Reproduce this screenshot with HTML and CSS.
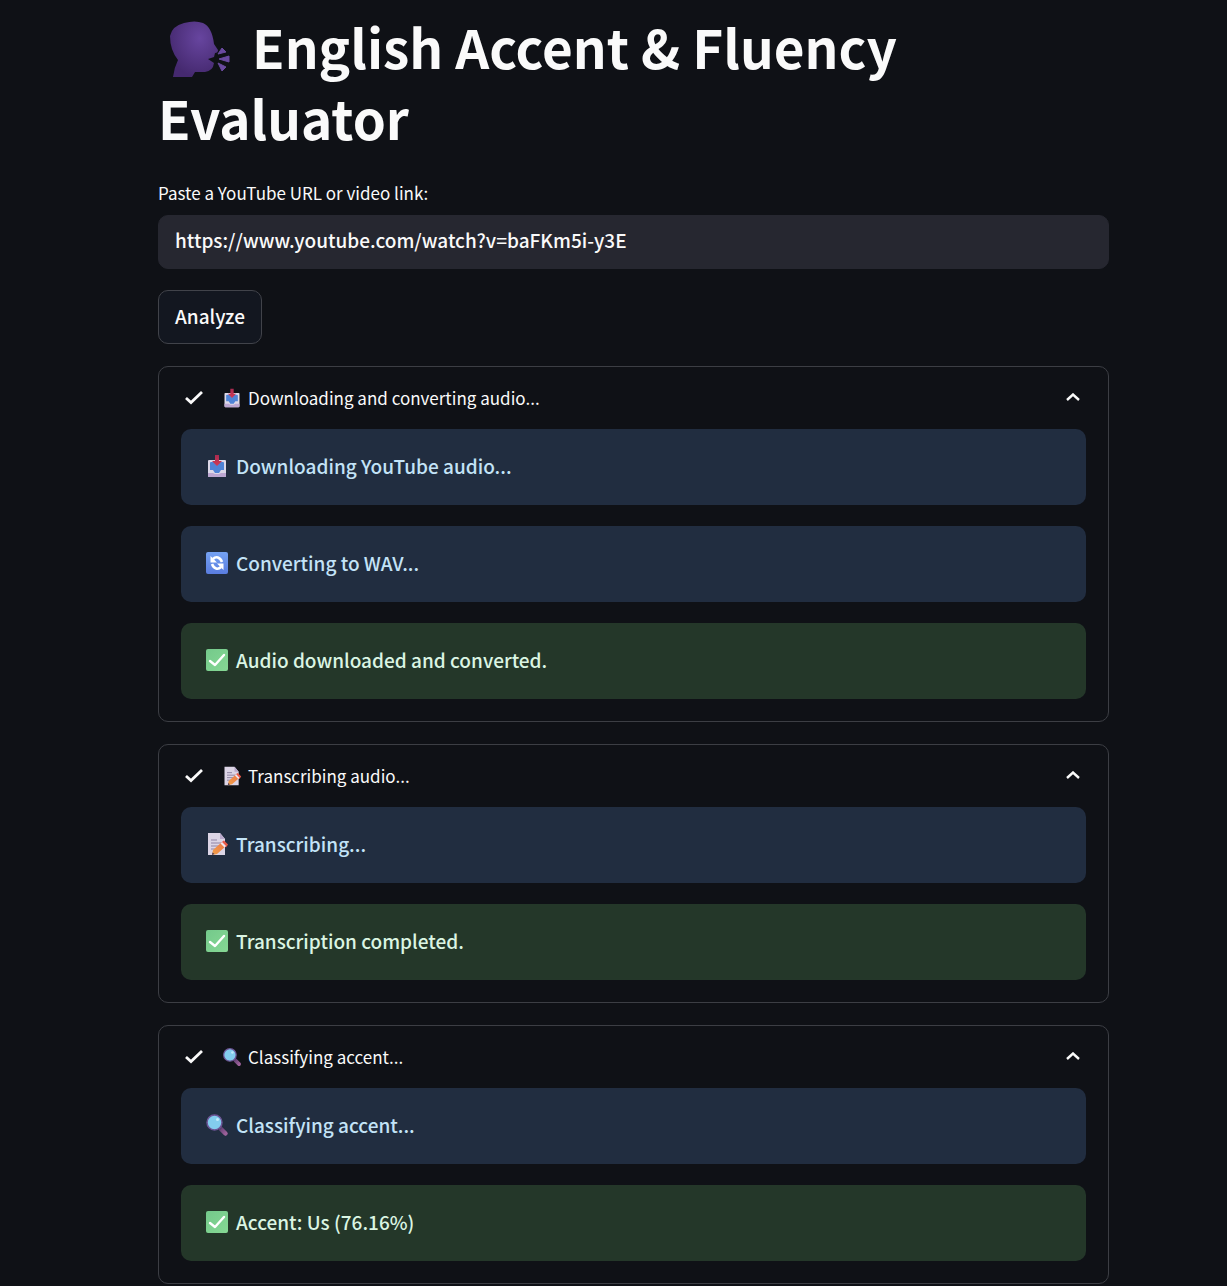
FILE: index.html
```html
<!DOCTYPE html>
<html lang="en">
<head>
<meta charset="utf-8">
<meta name="viewport" content="width=device-width, initial-scale=1">
<title>English Accent &amp; Fluency Evaluator</title>
<link rel="stylesheet" href="styles.css">
</head>
<body>
<svg class="sprite" aria-hidden="true">
  <defs>
    <radialGradient id="headFill" cx=".62" cy=".3" r=".7">
      <stop offset="0" stop-color="#67459f"/>
      <stop offset="1" stop-color="#45296f"/>
    </radialGradient>
    <linearGradient id="blueFill" x1="0" y1="0" x2="0" y2="1">
      <stop offset="0" stop-color="#75a2f2"/>
      <stop offset="1" stop-color="#5a7de0"/>
    </linearGradient>
    <linearGradient id="greenFill" x1="0" y1="0" x2="1" y2="1">
      <stop offset="0" stop-color="#74c98b"/>
      <stop offset="1" stop-color="#86d894"/>
    </linearGradient>
    <linearGradient id="arrowFill" x1="0" y1="0" x2="0" y2="1">
      <stop offset="0" stop-color="#a92a50"/>
      <stop offset="1" stop-color="#d33a55"/>
    </linearGradient>
    <linearGradient id="handleFill" x1="0" y1="0" x2="1" y2="1">
      <stop offset="0" stop-color="#6b4479"/>
      <stop offset="1" stop-color="#9b6099"/>
    </linearGradient>
    <linearGradient id="pencilFill" x1="0" y1="1" x2="1" y2="0">
      <stop offset="0" stop-color="#f2a24a"/>
      <stop offset="1" stop-color="#ec7446"/>
    </linearGradient>
  </defs>
  <symbol id="inbox" viewBox="0 0 24 24">
    <path d="M4 6h16q1 0 1 1v15q0 1-1 1H4q-1 0-1-1V7q0-1 1-1z" fill="#dcd8e8"/>
    <path d="M6 8h12q1 0 1 1v7h-3l-2 3h-4l-2-3H5V9q0-1 1-1z" fill="#4f83d6"/>
    <path d="M3 19h5l2 1h4l2-1h5v3q0 1-1 1H4q-1 0-1-1z" fill="#bda7d2"/>
    <path d="M10 1h4v6h3l-5 5-5-5h3z" fill="url(#arrowFill)"/>
  </symbol>
  <symbol id="refresh" viewBox="0 0 24 24">
    <rect x="1" y="1" width="22" height="22" rx="2" fill="url(#blueFill)"/>
    <g fill="none" stroke="#fff" stroke-width="2.6">
      <path d="M8 8c3-3 7-2 9 3"/>
      <path d="M16 16c-3 3-7 2-9-3"/>
    </g>
    <path d="M5.500 5v6.500h6.500zM18.500 19v-6.500h-6.500z" fill="#fff"/>
  </symbol>
  <symbol id="done" viewBox="0 0 24 24">
    <rect x="1" y="1" width="22" height="22" rx="2" fill="url(#greenFill)"/>
    <path d="M5 13l5 4 9-10" fill="none" stroke="#fff" stroke-width="2.400" stroke-linecap="round" stroke-linejoin="round"/>
  </symbol>
  <symbol id="memo" viewBox="0 0 24 24">
    <path d="M3 1h12l5 6v16H3z" fill="#dcd5e6"/>
    <path d="M15 1l5 6h-5z" fill="#b9a9cb"/>
    <path d="M6 8h6M6 11h10M6 14h8M6 17h5" stroke="#8f84a3" stroke-width="1.200"/>
    <path d="M7 23l1-5 9-8 4 4-9 8z" fill="url(#pencilFill)"/>
    <path d="M16 11l2-2 1-.5 4 4-2 3z" fill="#e85a48"/>
    <path d="M15.500 11.500l1.500-1.500 4 4-1.500 1.500z" fill="#eee5ee"/>
    <path d="M7 23l.5-2.500 2 1.500z" fill="#4b3a58"/>
  </symbol>
  <symbol id="lens" viewBox="0 0 24 24">
    <path d="M16 16l4.500 4.500" stroke="url(#handleFill)" stroke-width="4.500" stroke-linecap="round"/>
    <path d="M14 14l2 2" stroke="#57406e" stroke-width="2.500"/>
    <circle cx="9.500" cy="9.500" r="7.500" fill="#83cdee" stroke="#6d5596" stroke-width="1.500"/>
    <circle cx="12.500" cy="6.500" r="1.500" fill="#c3ebfb"/>
  </symbol>
  <symbol id="check" viewBox="0 0 20 16">
    <path d="M2 8l5 4.500L18 2" fill="none" stroke="currentColor" stroke-width="2.800"/>
  </symbol>
  <symbol id="chevron" viewBox="0 0 14 10">
    <path d="M1 7l6-5.500L13 7" fill="none" stroke="currentColor" stroke-width="2.400"/>
  </symbol>
</svg>

<main class="page">
  <h1 class="title"><svg class="title-icon" viewBox="0 0 62 58" aria-hidden="true">
    <path d="M3 56q1-9 5-17Q0 29 0 15 2 5 14 2 25-1 33 2q9 4 11 21l4 6q0 3-3 3l-1 4-6 2 6 4q-1 8-9 9H25l-3 5z" fill="url(#headFill)"/>
    <path d="M48 33l4-6 4 4zM49 38l10-3v6zM48 42l8 4-4 4z" fill="#6a4a9f" stroke="#6a4a9f" stroke-width="1" stroke-linejoin="round"/>
  </svg> English Accent &amp; Fluency Evaluator</h1>

  <form class="form" onsubmit="return false">
    <label class="label" for="video-url">Paste a YouTube URL or video link:</label>
    <input class="input" id="video-url" type="text" value="https://www.youtube.com/watch?v=baFKm5i-y3E" spellcheck="false">
    <button class="button" type="submit">Analyze</button>
  </form>

  <details class="status" open>
    <summary class="status-head">
      <svg class="check"><use href="#check"/></svg>
      <svg class="emoji-small"><use href="#inbox"/></svg>
      <span class="status-title">Downloading and converting audio...</span>
      <svg class="chevron"><use href="#chevron"/></svg>
    </summary>
    <div class="status-body">
      <p class="alert info"><svg class="emoji"><use href="#inbox"/></svg>Downloading YouTube audio...</p>
      <p class="alert info"><svg class="emoji"><use href="#refresh"/></svg>Converting to WAV...</p>
      <p class="alert success"><svg class="emoji"><use href="#done"/></svg>Audio downloaded and converted.</p>
    </div>
  </details>

  <details class="status" open>
    <summary class="status-head">
      <svg class="check"><use href="#check"/></svg>
      <svg class="emoji-small"><use href="#memo"/></svg>
      <span class="status-title">Transcribing audio...</span>
      <svg class="chevron"><use href="#chevron"/></svg>
    </summary>
    <div class="status-body">
      <p class="alert info"><svg class="emoji"><use href="#memo"/></svg>Transcribing...</p>
      <p class="alert success"><svg class="emoji"><use href="#done"/></svg>Transcription completed.</p>
    </div>
  </details>

  <details class="status" open>
    <summary class="status-head">
      <svg class="check"><use href="#check"/></svg>
      <svg class="emoji-small"><use href="#lens"/></svg>
      <span class="status-title">Classifying accent...</span>
      <svg class="chevron"><use href="#chevron"/></svg>
    </summary>
    <div class="status-body">
      <p class="alert info"><svg class="emoji"><use href="#lens"/></svg>Classifying accent...</p>
      <p class="alert success"><svg class="emoji"><use href="#done"/></svg>Accent: Us (76.16%)</p>
    </div>
  </details>
</main>
</body>
</html>
```
FILE: styles.css
```css
* {
  box-sizing: border-box;
}

body {
  margin: 0;
  background: #0f1116;
  color: #fafafa;
  font-family: "Noto Sans CJK SC", "Noto Sans", sans-serif;
  font-size: 19px;
  font-weight: 500;
  line-height: 32px;
}

.sprite {
  position: absolute;
  width: 0;
  height: 0;
}

.page {
  display: flex;
  flex-direction: column;
  gap: 22px;
  padding: 11px 118px 3px 158px;
}

.title {
  margin: 0;
  padding-bottom: 5px;
  font-size: 53px;
  font-weight: 700;
  line-height: 71px;
}

.title-icon {
  width: 62px;
  height: 58px;
  margin: 0 8px 0 12px;
  vertical-align: -10px;
}

.form {
  display: flex;
  flex-direction: column;
  align-items: flex-start;
}

.label {
  margin-bottom: 9px;
  font-size: 17px;
  font-weight: 400;
  line-height: 26px;
}

.input {
  width: 100%;
  height: 54px;
  margin-bottom: 21px;
  padding: 0 16px 5px;
  border: 1px solid #262730;
  border-radius: 10px;
  background: #262730;
  color: #fafafa;
  font: inherit;
}

.button {
  height: 54px;
  padding: 0 16px 2px;
  border: 1px solid #41434a;
  border-radius: 10px;
  background: #131720;
  color: #fafafa;
  font: inherit;
}

.status {
  border: 1px solid #3c3e44;
  border-radius: 10px;
}

.status-head {
  display: flex;
  align-items: center;
  height: 62px;
  padding: 0 28px 0 25px;
  font-size: 17px;
  font-weight: 400;
  list-style: none;
  cursor: pointer;
}

.check {
  width: 20px;
  height: 16px;
  margin-right: 18px;
}

.emoji-small {
  width: 20px;
  height: 20px;
  margin-right: 6px;
}

.status-title {
  flex: 1;
}

.chevron {
  width: 14px;
  height: 10px;
}

.status-body {
  display: flex;
  flex-direction: column;
  gap: 21px;
  padding: 0 22px 22px;
}

.alert {
  display: flex;
  align-items: center;
  gap: 7px;
  min-height: 76px;
  margin: 0;
  padding: 21px 24px 23px;
  border-radius: 10px;
}

.info {
  background: #212d40;
  color: #c3e3f7;
}

.success {
  background: #243729;
  color: #dbf5e3;
}

.emoji {
  flex: none;
  width: 24px;
  height: 24px;
}
```
